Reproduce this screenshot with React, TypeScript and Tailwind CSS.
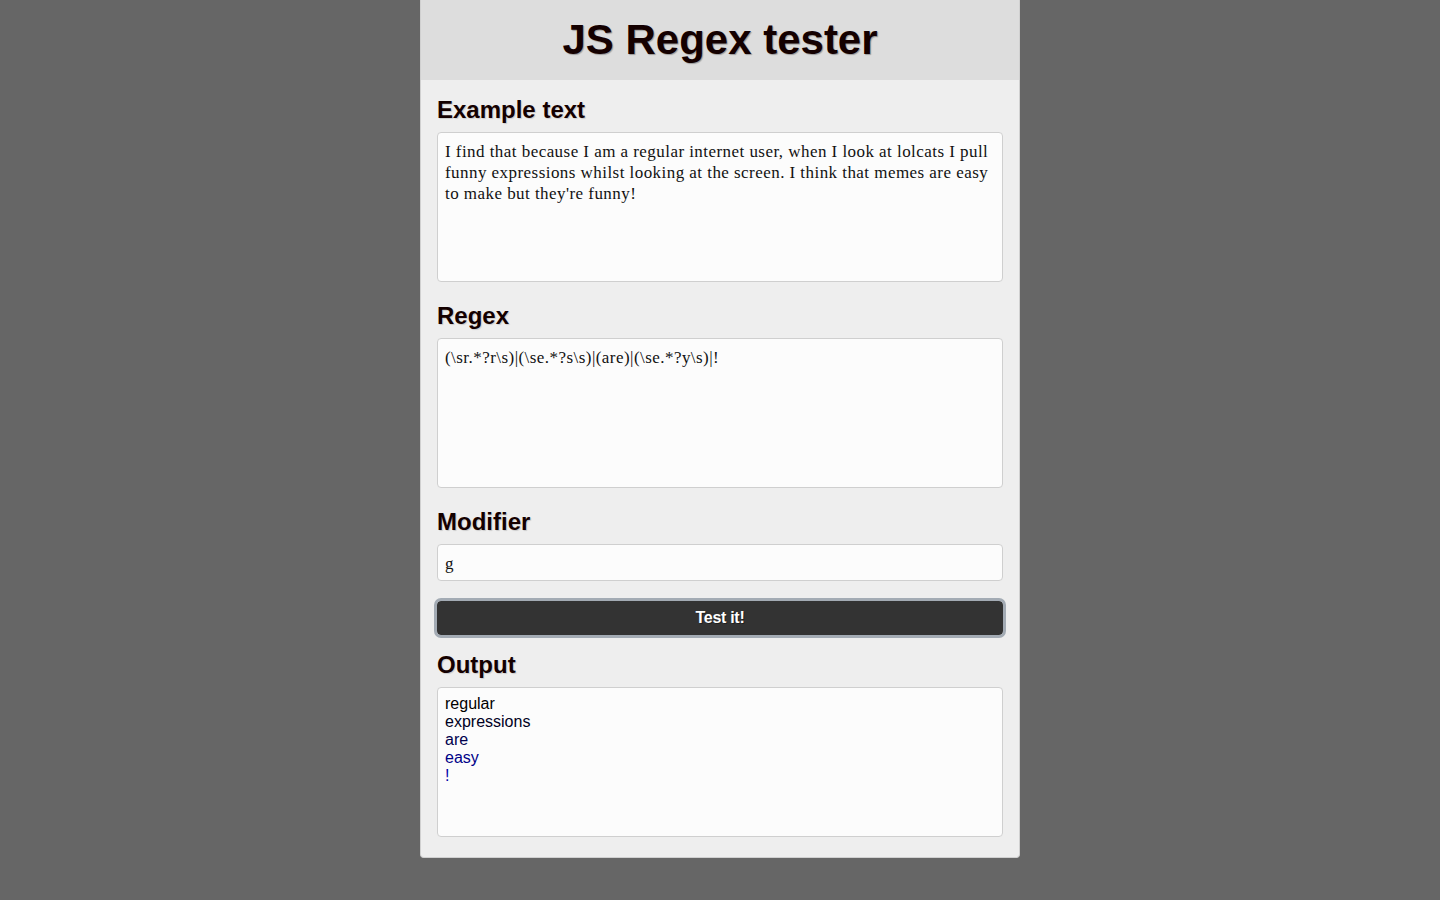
import { useState } from 'react';

const sampleText =
  "I find that because I am a regular internet user, when I look at lolcats I pull funny expressions whilst looking at the screen. I think that memes are easy to make but they're funny!";

const sampleRegex = '(\\sr.*?r\\s)|(\\se.*?s\\s)|(are)|(\\se.*?y\\s)|!';

// matches get darker -> bluer as they go down the list
const outputLines = [
  { text: 'regular', color: 'text-[#000000]' },
  { text: 'expressions', color: 'text-[#000022]' },
  { text: 'are', color: 'text-[#00004d]' },
  { text: 'easy', color: 'text-[#000088]' },
  { text: '!', color: 'text-[#0000aa]' },
];

const headingClass =
  "font-['Liberation_Sans',Arial,sans-serif] text-[24px] leading-[28px] font-bold text-[#140000] [text-shadow:1px_1px_1px_rgba(0,0,0,0.15)]";

const fieldClass =
  "block w-full resize-none rounded-[4px] border border-[#cfcfcf] bg-[#fcfcfc] px-[7px] pt-[8px] pb-[6px] font-['Liberation_Serif','DejaVu_Serif',serif] text-[17px] leading-[21px] tracking-[0.45px] text-[#111] outline-none";

export default function App() {
  const [text] = useState(sampleText);
  const [regex] = useState(sampleRegex);

  return (
    <div className="min-h-[900px] w-full bg-[#666666]">
      <main className="mx-auto w-[600px] overflow-hidden rounded-b-[4px] border-x border-b border-[#d0d0d0] bg-[#eeeeee]">
        <header className="flex h-[80px] items-center justify-center bg-[#dddddd]">
          <h1 className="font-['Liberation_Sans',Arial,sans-serif] text-[42px] leading-[48px] font-bold text-[#140000] [text-shadow:1px_1px_1px_rgba(0,0,0,0.3)]">
            JS Regex tester
          </h1>
        </header>

        <div className="px-[16px] pt-[16px] pb-[20px]">
          <h2 className={headingClass}>Example text</h2>
          <textarea readOnly value={text} className={`${fieldClass} mt-[8px] h-[150px]`} />

          <h2 className={`${headingClass} mt-[20px]`}>Regex</h2>
          <textarea readOnly value={regex} className={`${fieldClass} mt-[8px] h-[150px]`} />

          <h2 className={`${headingClass} mt-[20px]`}>Modifier</h2>
          <input readOnly value="g" className={`${fieldClass} mt-[8px] h-[37px] pt-[7px] pb-[5px]`} />

          <button className="mt-[20px] block h-[34px] w-full rounded-[4px] bg-[#333333] font-['Liberation_Sans',Arial,sans-serif] text-[16px] font-bold tracking-[-0.3px] text-white outline outline-[3px] outline-[#a3abb4] [text-shadow:1px_1px_0_rgba(0,0,0,0.4)]">
            Test it!
          </button>

          <h2 className={`${headingClass} mt-[16px]`}>Output</h2>
          <div className="mt-[8px] h-[150px] rounded-[4px] border border-[#cfcfcf] bg-[#fcfcfc] px-[7px] pt-[7px] pb-[6px] font-['Liberation_Sans',Arial,sans-serif] text-[16px] leading-[18px]">
            {outputLines.map((line) => (
              <div key={line.text} className={line.color}>
                {line.text}
              </div>
            ))}
          </div>
        </div>
      </main>
    </div>
  );
}
